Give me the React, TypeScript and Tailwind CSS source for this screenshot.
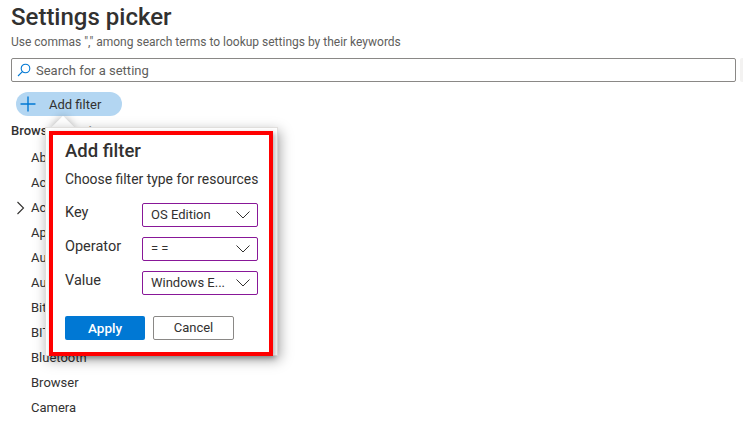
import { Plus } from 'lucide-react';

const categories = ['About', 'Accounts', 'Accessibility', 'Apps', 'Audit', 'Authentication', 'BitLocker', 'BITS', 'Bluetooth', 'Browser', 'Camera'];

const filters = [
  { label: 'Key', value: 'OS Edition' },
  { label: 'Operator', value: '==' },
  { label: 'Value', value: 'Windows E...' },
];

function Chevron() {
  return (
    <svg width="16" height="10" viewBox="0 0 16 10" fill="none" stroke="#323130" strokeWidth="1">
      <path d="M1.5 1.5 L8 8 L14.5 1.5" />
    </svg>
  );
}

function SearchIcon() {
  return (
    <svg width="14" height="14" viewBox="0 0 14 14" fill="none" stroke="#0078d4" strokeWidth="1.1">
      <circle cx="8.5" cy="5.5" r="4.3" />
      <path d="M5.4 8.6 L1 13" />
    </svg>
  );
}

export default function App() {
  return (
    <div className="relative h-[433px] w-[743px] overflow-hidden bg-white text-[#323130] font-['Roboto',sans-serif]">
      <div className="pl-[11px] pt-[1px]">
        <h1 className="text-[24px] leading-[32px] font-medium">Settings picker</h1>
        <p className="mt-[1px] text-[12px] leading-[16px] text-[#605e5c]">Use commas "," among search terms to lookup settings by their keywords</p>
        <div className="mt-[8px] flex items-center">
          <div className="flex h-[24px] w-[725px] items-center gap-[5px] rounded-[2px] border border-[#8a8886] pl-[5px]">
            <SearchIcon />
            <span className="mt-[1px] text-[13px] text-[#605e5c]">Search for a setting</span>
          </div>
          <div className="ml-[4px] h-[24px] flex-1 rounded-l-[2px] bg-[#f3f2f1]" />
        </div>
        <div className="mt-[10px] ml-[5px] flex h-[24px] w-[106px] items-center gap-[9px] rounded-full bg-[#b3d6f2]">
          <Plus className="h-[24px] w-[24px] text-[#0078d4]" strokeWidth={1.4} />
          <span className="mt-[1px] text-[13px]">Add filter</span>
        </div>
        <div className="mt-[6px] text-[13px] leading-[18px] font-medium">Browse by category</div>
        <ul className="mt-[5px]">
          {categories.map((name, i) => (
            <li key={name} className="relative h-[25px] pl-[20px] text-[13px] leading-[25px]">
              {i === 2 && (
                <svg className="absolute left-[5px] top-[6px]" width="9" height="14" viewBox="0 0 9 14" fill="none" stroke="#323130" strokeWidth="1.1">
                  <path d="M1.5 1 L7.5 7 L1.5 13" />
                </svg>
              )}
              {name}
            </li>
          ))}
        </ul>
      </div>

      {/* callout beak, sits behind the popup */}
      <div className="absolute left-[55px] top-[119px] h-[16px] w-[16px] rotate-45 bg-white shadow-[0_0_8px_rgba(0,0,0,0.3)]" />
      <div className="absolute left-[45px] top-[127px] h-[229px] w-[233px] border border-[#e1dfdd] bg-white pl-[3px] pt-[3px] shadow-[2px_4px_12px_rgba(0,0,0,0.35)]">
        <div className="relative flex h-[225px] w-[224px] flex-col border-[4px] border-[#ff0000] pl-[12px] pr-[11px] pt-[3px] shadow-[2px_2px_5px_rgba(0,0,0,0.3)]">
          <h2 className="text-[18.5px] leading-[26px] font-medium">Add filter</h2>
          <p className="mt-[6px] text-[13.9px] leading-[18px] whitespace-nowrap">Choose filter type for resources</p>
          <div className="mt-[15px] flex flex-col gap-[10px]">
            {filters.map((f) => (
              <div key={f.label} className="flex h-[24px]">
                <span className="w-[77px] text-[14.5px] leading-[20px]">{f.label}</span>
                <div className="flex h-[24px] w-[116px] items-center justify-between rounded-[2px] border border-[#881798] pl-[8px] pr-[6px]">
                  <span className={f.value === '==' ? 'text-[13px] tracking-[3px]' : 'text-[13px] whitespace-nowrap'}>{f.value}</span>
                  <Chevron />
                </div>
              </div>
            ))}
          </div>
          <div className="mt-[21px] flex gap-[8px]">
            <button className="h-[24px] w-[80px] rounded-[2px] bg-[#0078d4] text-[13.5px] font-medium text-white">Apply</button>
            <button className="h-[24px] w-[81px] rounded-[2px] border border-[#8a8886] bg-white text-[13px]">Cancel</button>
          </div>
        </div>
      </div>
    </div>
  );
}
